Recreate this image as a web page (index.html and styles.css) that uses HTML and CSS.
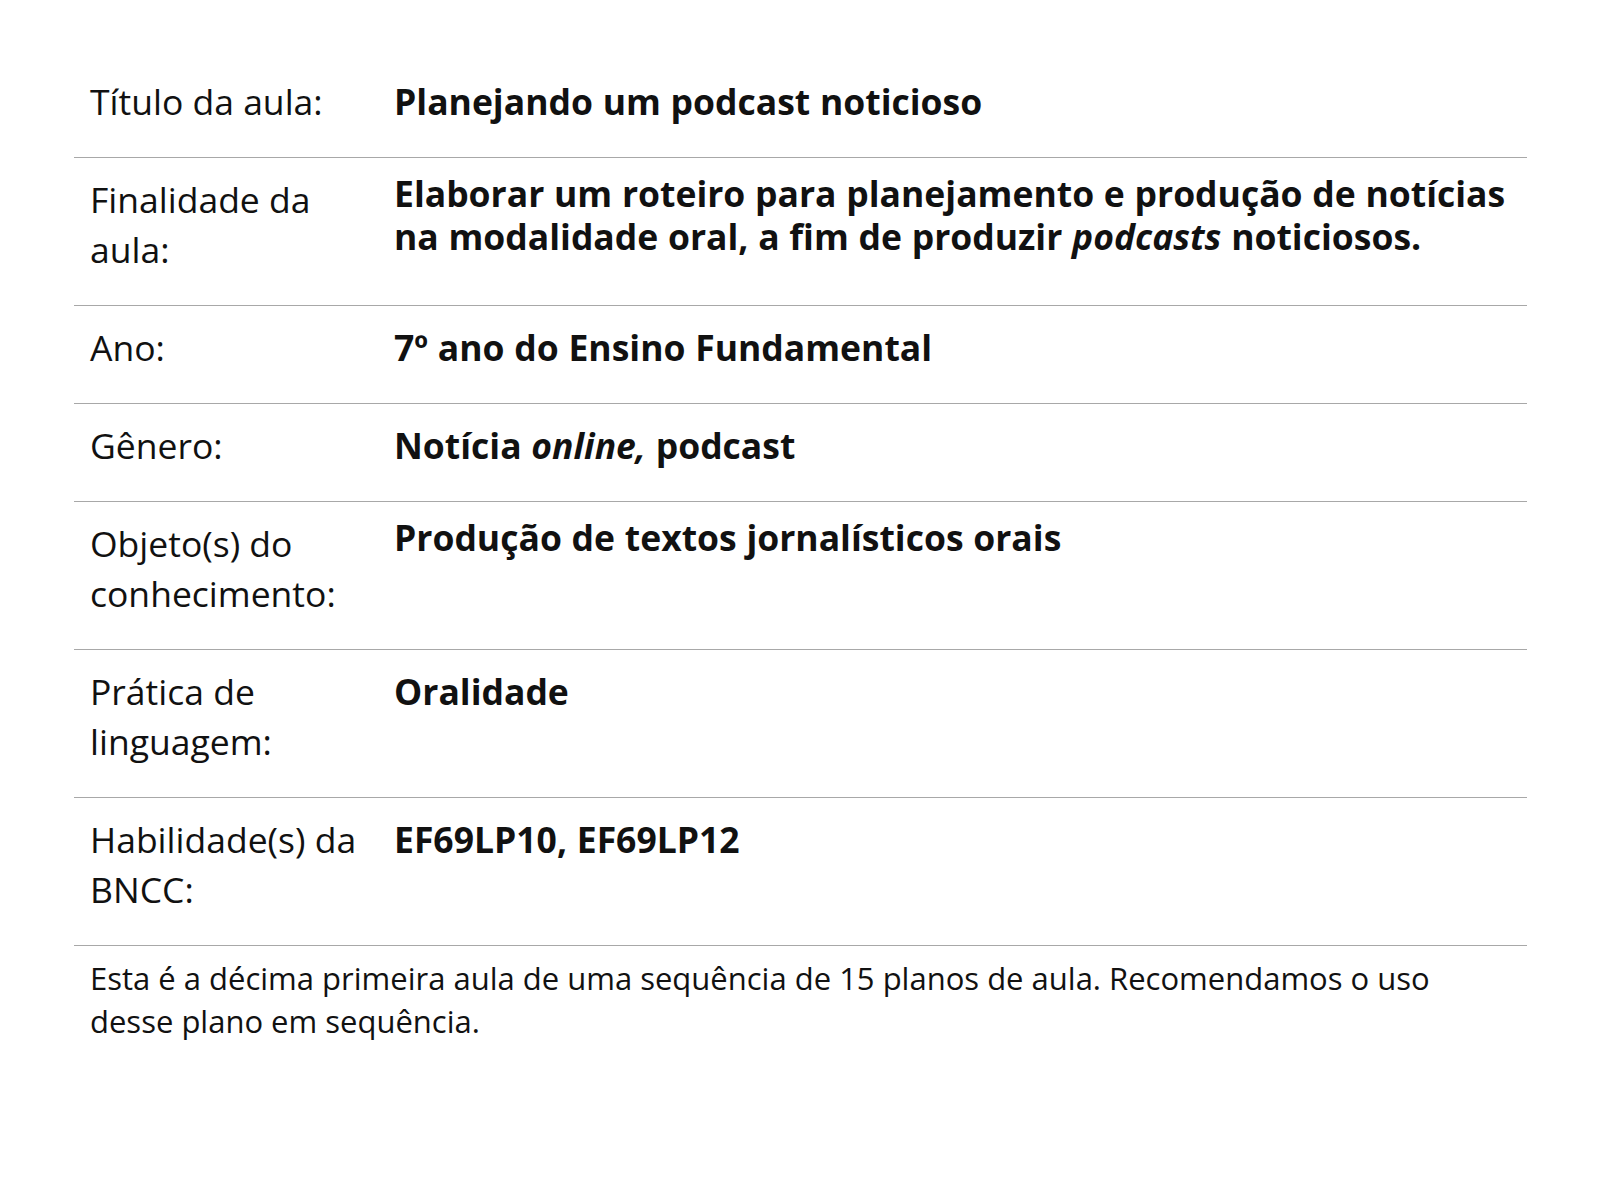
FILE: index.html
```html
<!DOCTYPE html>
<html lang="pt-BR">
<head>
<meta charset="utf-8">
<title>Plano de aula</title>
<link rel="stylesheet" href="styles.css">
</head>
<body>
<main class="page">
  <div class="plan">
    <div class="row">
      <div class="label">Título da aula:</div>
      <div class="value">Planejando um podcast noticioso</div>
    </div>
    <div class="row">
      <div class="label">Finalidade da aula:</div>
      <div class="value value-raised">Elaborar um roteiro para planejamento e produção de notícias na modalidade oral, a fim de produzir <em>podcasts</em> noticiosos.</div>
    </div>
    <div class="row">
      <div class="label">Ano:</div>
      <div class="value">7º ano do Ensino Fundamental</div>
    </div>
    <div class="row">
      <div class="label">Gênero:</div>
      <div class="value">Notícia <em>online,</em> podcast</div>
    </div>
    <div class="row">
      <div class="label">Objeto(s) do conhecimento:</div>
      <div class="value value-raised">Produção de textos jornalísticos orais</div>
    </div>
    <div class="row">
      <div class="label">Prática de linguagem:</div>
      <div class="value">Oralidade</div>
    </div>
    <div class="row">
      <div class="label">Habilidade(s) da BNCC:</div>
      <div class="value">EF69LP10, EF69LP12</div>
    </div>
  </div>
  <p class="note">Esta é a décima primeira aula de uma sequência de 15 planos de aula. Recomendamos o uso desse plano em sequência.</p>
</main>
</body>
</html>
```

FILE: styles.css
```css
html, body {
  margin: 0;
  padding: 0;
  background: #ffffff;
}

body {
  font-family: "Open Sans", "Noto Sans", sans-serif;
  color: #111111;
}

.page {
  width: 1453px;
  margin: 0 0 0 74px;
  padding-top: 60px;
}

.plan {
  display: flex;
  flex-direction: column;
}

.row {
  display: grid;
  grid-template-columns: 304px 1fr;
  border-bottom: 1px solid #a8a8a8;
  padding: 16px 0 31px;
}

.label {
  padding: 0 16px;
  font-size: 35.5px;
  line-height: 50px;
  font-weight: 400;
}

.value {
  padding: 4px 2px 0 16px;
  font-size: 35.5px;
  line-height: 43px;
  font-weight: 700;
  word-spacing: 0.5px;
}

.value-raised {
  padding-top: 0;
  margin-top: -2px;
}

.value em {
  font-style: italic;
}

.note {
  margin: 11px 0 0;
  padding: 0 40px 0 16px;
  font-size: 31px;
  line-height: 43px;
  font-weight: 400;
}
```
